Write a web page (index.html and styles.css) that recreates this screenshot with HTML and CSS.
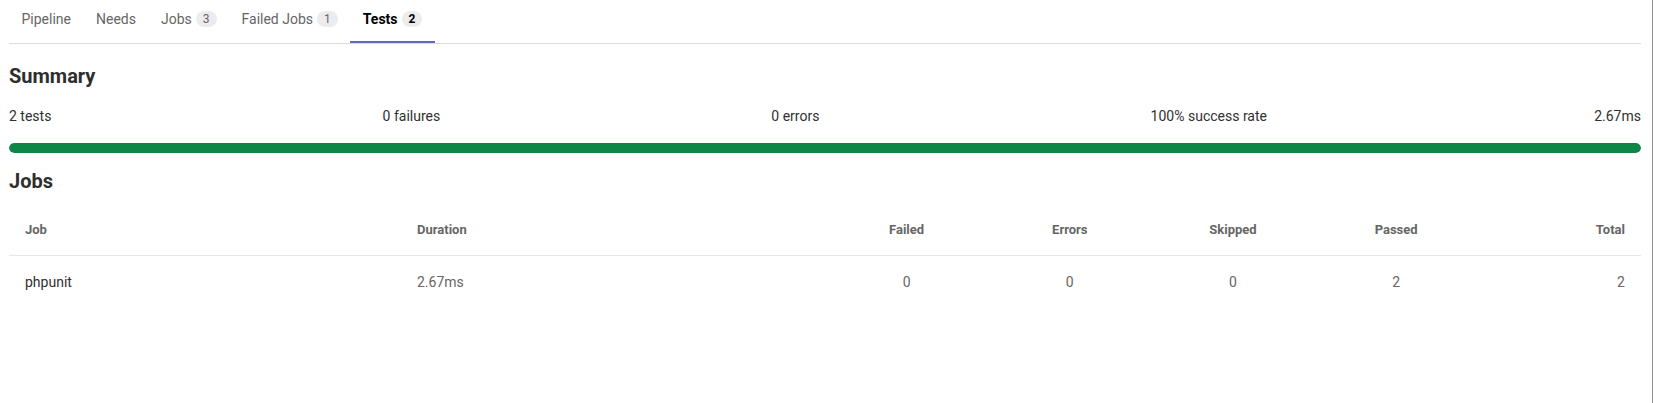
FILE: index.html
```html
<!DOCTYPE html>
<html lang="en">
<head>
<meta charset="utf-8">
<title>Pipeline tests</title>
<link rel="stylesheet" href="styles.css">
</head>
<body>
<div class="frame">
  <main class="page">
    <nav class="tabs">
      <a class="tab">Pipeline</a>
      <a class="tab">Needs</a>
      <a class="tab">Jobs<span class="badge">3</span></a>
      <a class="tab">Failed Jobs<span class="badge">1</span></a>
      <a class="tab active">Tests<span class="badge">2</span></a>
    </nav>

    <h4 class="title summary-title">Summary</h4>
    <div class="summary-row">
      <span>2 tests</span>
      <span class="nudge">0 failures</span>
      <span class="nudge">0 errors</span>
      <span class="nudge">100% success rate</span>
      <span>2.67ms</span>
    </div>
    <div class="progress"><div class="progress-bar" style="width: 100%"></div></div>

    <h4 class="title jobs-title">Jobs</h4>
    <div class="table">
      <div class="row header">
        <div class="cell s25 pl">Job</div>
        <div class="cell s25">Duration</div>
        <div class="cell s10 center">Failed</div>
        <div class="cell s10 center">Errors</div>
        <div class="cell s10 center">Skipped</div>
        <div class="cell s10 center">Passed</div>
        <div class="cell s10 right pr">Total</div>
      </div>
      <div class="row data">
        <div class="cell s25 pl name">phpunit</div>
        <div class="cell s25">2.67ms</div>
        <div class="cell s10 center">0</div>
        <div class="cell s10 center">0</div>
        <div class="cell s10 center">0</div>
        <div class="cell s10 center">2</div>
        <div class="cell s10 right pr">2</div>
      </div>
    </div>
  </main>
  <div class="edge"></div>
</div>
</body>
</html>
```

FILE: styles.css
```css
html, body {
  margin: 0;
  padding: 0;
  background: #fff;
}

body {
  font-family: Roboto, "Liberation Sans", sans-serif;
  font-size: 14px;
  color: #303030;
}

.frame {
  display: flex;
  min-height: 403px;
}

.page {
  margin-left: 9px;
  width: 1632px;
}

.edge {
  margin-left: 11px;
  width: 1px;
  background: #8f8f8f;
}

/* Tabs */
.tabs {
  display: flex;
  border-bottom: 1px solid #dbdbdb;
}

.tab {
  display: flex;
  align-items: center;
  padding: 9px 12.5px 14px;
  line-height: 20px;
  color: #666;
  cursor: pointer;
}

.tab.active {
  color: #000;
  font-weight: 700;
  box-shadow: inset 0 -2px 0 0 #6666c4;
}

.badge {
  display: inline-block;
  margin-left: 4px;
  padding: 0 7px;
  height: 16px;
  line-height: 16px;
  border-radius: 8px;
  background: #ececef;
  color: #666;
  font-size: 12px;
  font-weight: 400;
}

.tab.active .badge {
  color: #000;
  font-weight: 700;
}

/* Headings */
.title {
  margin: 0;
  font-size: 20px;
  line-height: 24px;
  font-weight: 700;
  color: #2e2e2e;
}

.summary-title {
  margin-top: 20px;
}

.summary-row {
  display: flex;
  justify-content: space-between;
  margin-top: 18px;
  line-height: 20px;
  color: #303030;
}

.summary-row .nudge {
  margin-left: 4px;
}

.progress {
  margin-top: 17px;
  height: 10px;
  border-radius: 5px;
  background: #ececef;
  overflow: hidden;
}

.progress-bar {
  height: 100%;
  background: #108548;
  border-radius: 5px;
}

.jobs-title {
  margin-top: 16px;
}

/* Table */
.table {
  margin-top: 11px;
}

.row {
  display: flex;
  align-items: center;
}

.row.header {
  height: 51px;
  border-bottom: 1px solid #e8e8e8;
  font-size: 13px;
  font-weight: 700;
  color: #666;
}

.row.data {
  height: 52px;
  color: #666;
}

.cell {
  box-sizing: border-box;
}

.s25 { width: 25%; }
.s10 { width: 10%; }
.pl { padding-left: 16px; }
.pr { padding-right: 16px; }
.center { text-align: center; }
.right { text-align: right; }

.name {
  color: #303030;
}
```
